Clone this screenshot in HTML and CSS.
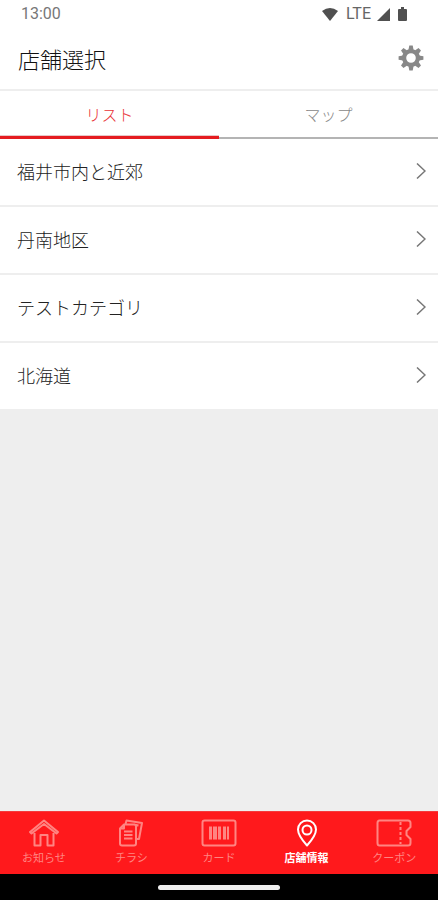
FILE: index.html
```html
<!DOCTYPE html>
<html lang="ja">
<head>
<meta charset="utf-8">
<meta name="viewport" content="width=device-width, initial-scale=1">
<title>店舗選択</title>
<link rel="stylesheet" href="styles.css">
</head>
<body>
<div class="status">
  <span class="status-time">13:00</span>
  <svg class="wifi" width="16" height="13" viewBox="0 0 16 13"><path d="M0 3Q8-3 16 3L8 13Z"/></svg>
  <span class="status-net">LTE</span>
  <svg class="signal" width="13" height="13" viewBox="0 0 13 13"><path d="M13 0V13H0Z"/></svg>
  <svg class="battery" width="9" height="14" viewBox="0 0 9 14"><path d="M3 0h3v2h2q1 0 1 1v10q0 1-1 1H1q-1 0-1-1V3q0-1 1-1h2Z"/></svg>
</div>
<header class="header">
  <h1 class="title">店舗選択</h1>
  <button class="settings" type="button" aria-label="設定">
    <svg width="26" height="26" viewBox="-13 -13 26 26">
      <circle r="6.9" fill="none" stroke="#888" stroke-width="4.2"/>
      <g fill="#888">
        <path id="tooth" d="M-2.6-8L-1.7-12.4H1.7L2.6-8Z"/>
        <use href="#tooth" transform="rotate(45)"/>
        <use href="#tooth" transform="rotate(90)"/>
        <use href="#tooth" transform="rotate(135)"/>
        <use href="#tooth" transform="rotate(180)"/>
        <use href="#tooth" transform="rotate(225)"/>
        <use href="#tooth" transform="rotate(270)"/>
        <use href="#tooth" transform="rotate(315)"/>
      </g>
    </svg>
  </button>
</header>
<div class="tabs" role="tablist">
  <button class="tab tab-active" type="button" role="tab" aria-selected="true">リスト</button>
  <button class="tab" type="button" role="tab" aria-selected="false">マップ</button>
</div>
<main class="content">
  <ul class="list">
    <li class="item"><a class="row" href="#fukui">福井市内と近郊<svg class="chevron" width="10" height="16" viewBox="0 0 10 16"><path stroke-width="1.5" d="M1 .5L9 8L1 15.500"/></svg></a></li>
    <li class="item"><a class="row" href="#tannan">丹南地区<svg class="chevron" width="10" height="16" viewBox="0 0 10 16"><path stroke-width="1.5" d="M1 .5L9 8L1 15.500"/></svg></a></li>
    <li class="item"><a class="row" href="#test">テストカテゴリ<svg class="chevron" width="10" height="16" viewBox="0 0 10 16"><path stroke-width="1.5" d="M1 .5L9 8L1 15.500"/></svg></a></li>
    <li class="item"><a class="row" href="#hokkaido">北海道<svg class="chevron" width="10" height="16" viewBox="0 0 10 16"><path stroke-width="1.5" d="M1 .5L9 8L1 15.500"/></svg></a></li>
  </ul>
</main>
<nav class="nav">
  <a class="nav-item" href="#news">
    <svg width="36" height="28" viewBox="0 0 36 28"><path d="M8.500 14V26.500H14.500V16H21.500V26.500H27.500V14M4 13L18 1.500L32 13L30.500 14.500L18 5L5.500 14.500Z"/></svg>
    <span>お知らせ</span>
  </a>
  <a class="nav-item" href="#flyer">
    <svg width="36" height="28" viewBox="0 0 36 28"><path d="M11 5.500H21Q23 5.500 23 7.500V24.500Q23 26.500 21 26.500H9Q7 26.500 7 24.500V9.500ZM7 9.500H11V5.500M12.500 5L13.500 1.500L29 4L26 20H23M21 5.500L25.500 6.500M11 12.500H19.500M11 16H19.500M11 19.500H19.500"/></svg>
    <span>チラシ</span>
  </a>
  <a class="nav-item" href="#card">
    <svg width="36" height="28" viewBox="0 0 36 28"><rect x="1.500" y="1.500" width="33" height="25" rx="2"/><path class="solid" d="M8 7.500h3v13H8zM12 7.500h4v13h-4zM17 7.500h3v13h-3zM22 7.500h3v13h-3zM26 7.500h2v13h-2z"/></svg>
    <span>カード</span>
  </a>
  <a class="nav-item nav-active" href="#shop" aria-current="page">
    <svg width="36" height="28" viewBox="0 0 36 28"><path d="M18 26.500Q9 16.500 9 10.500A9 9 0 0 1 27 10.500Q27 16.500 18 26.500Z"/><circle cx="18" cy="11" r="4.500"/></svg>
    <span>店舗情報</span>
  </a>
  <a class="nav-item" href="#coupon">
    <svg width="36" height="28" viewBox="0 0 36 28"><path d="M3.500 1.500H32Q34.500 1.500 34.500 4V8L30.500 12V16L34.500 20V24Q34.500 26.500 32 26.500H3.500Q1.500 26.500 1.500 24V4Q1.500 1.500 3.500 1.500Z"/><path stroke-dasharray="3 2" d="M24.500 3V25"/></svg>
    <span>クーポン</span>
  </a>
</nav>
<div class="system"><div class="handle"></div></div>
</body>
</html>
```
FILE: styles.css
```css
* {
  box-sizing: border-box;
}

body {
  margin: 0;
  min-height: 100vh;
  display: flex;
  flex-direction: column;
  background: #eee;
  color: #222;
  font-family: "Noto Sans CJK JP", sans-serif;
  font-weight: 300;
}

button {
  padding: 0;
  border: 0;
  background: none;
  font: inherit;
  color: inherit;
}

a {
  color: inherit;
  text-decoration: none;
}

svg {
  display: block;
  flex: none;
}

.status {
  display: flex;
  align-items: center;
  height: 28px;
  padding: 0 31px 0 21px;
  background: #fff;
  color: #777;
  font: 400 16px/28px Roboto, sans-serif;
}

.status svg {
  fill: #505050;
}

.status-time {
  flex: 1;
}

.status-net {
  margin: 0 6px 0 8px;
  color: #666;
}

.battery {
  margin-left: 8px;
}

.header {
  display: flex;
  align-items: center;
  justify-content: space-between;
  height: 63px;
  padding: 0 14px 2px 18px;
  background: #fff;
  border-bottom: 2px solid #eee;
}

.title {
  margin: 0;
  color: #111;
  font-size: 22px;
  line-height: 32px;
  font-weight: 300;
}

.tabs {
  display: flex;
  height: 48px;
  background: #fff;
}

.tab {
  flex: 1;
  border-bottom: 2px solid #b4b4b4;
  color: #888;
  font-size: 16px;
}

.tab-active {
  border-bottom: 3px solid #e51c20;
  box-shadow: inset 0 -1px #e8c8c8;
  color: #e93338;
}

.content {
  flex: 1;
}

.list {
  margin: 0;
  padding: 0;
  list-style: none;
  background: #fff;
}

.item + .item {
  border-top: 2px solid #eee;
}

.row {
  display: flex;
  align-items: center;
  justify-content: space-between;
  height: 66px;
  padding: 0 12px 2px 17px;
  font-size: 18px;
}

.chevron {
  fill: none;
  stroke: #777;
}

.nav {
  display: grid;
  grid-template-columns: repeat(5, 1fr);
  height: 63px;
  padding-top: 7px;
  border-top: 1px solid #f43a3c;
  background: #ff191c;
}

.nav-item {
  display: flex;
  flex-direction: column;
  align-items: center;
  gap: 2px;
  color: #ff8582;
  font-size: 11px;
  font-weight: 400;
  line-height: 16px;
}

.nav-item svg {
  fill: none;
  stroke: currentColor;
  stroke-width: 2;
  stroke-linejoin: round;
}

.nav-item .solid {
  fill: currentColor;
  stroke: none;
}

.nav-active {
  color: #fff;
  font-weight: 700;
}

.system {
  display: flex;
  align-items: center;
  justify-content: center;
  height: 26px;
  background: #000;
}

.handle {
  width: 28%;
  height: 5px;
  border-radius: 3px;
  background: #eee;
}
```
